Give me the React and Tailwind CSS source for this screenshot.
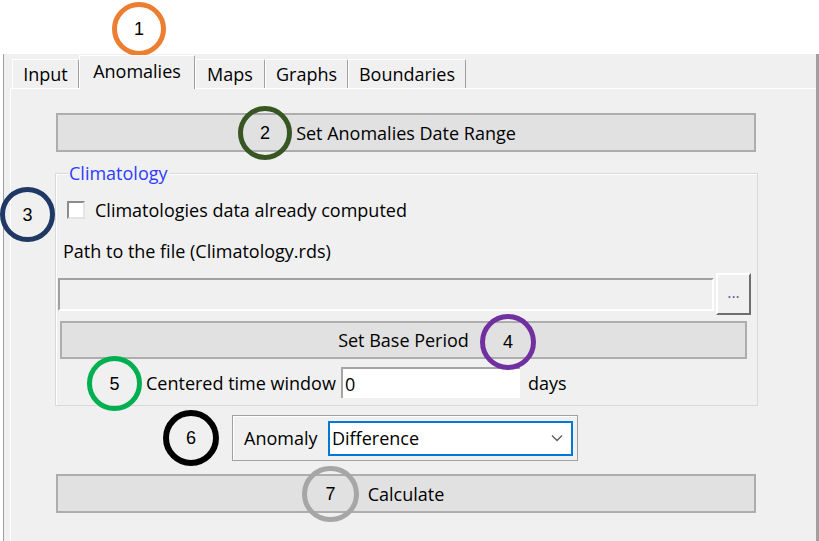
import React from "react";

function Ring({ className, n }) {
  return (
    <div
      className={`absolute rounded-full flex items-center justify-center bg-transparent text-[18px] text-black ${className}`}
      style={{ fontFamily: '"Liberation Sans", Arial, sans-serif' }}
    >
      {n}
    </div>
  );
}

function WinButton({ className, children }) {
  return (
    <div
      className={`flex items-center justify-center bg-[#e1e1e1] border-2 border-[#adadad] text-black ${className}`}
    >
      {children}
    </div>
  );
}

function Tab({ w, selected, children }) {
  if (selected) {
    return (
      <div
        className={`${w} h-[34px] -mb-[1px] relative z-10 bg-[#f0f0f0] border-t border-l border-white border-r border-r-[#a0a0a0] rounded-tr-[2px] flex items-start justify-center pt-[4px]`}
      >
        {children}
      </div>
    );
  }
  return (
    <div
      className={`${w} h-[29px] bg-[#f0f0f0] border-t border-l border-white border-r border-r-[#a0a0a0] rounded-tr-[2px] flex items-start justify-center pt-[3px]`}
    >
      {children}
    </div>
  );
}

export default function App() {
  return (
    <div
      className="w-[819px] h-[541px] bg-white relative overflow-hidden text-[18px] leading-[22px] text-black"
      style={{ fontFamily: '"Open Sans", "Noto Sans", sans-serif' }}
    >
      <div className="h-[54px]" />
      <div className="h-[487px] ml-[3px] bg-[#f0f0f0] border-l border-l-[#a0a0a0] border-r-[3px] border-r-[#a0a0a0] flex flex-col">
        {/* tab strip */}
        <div className="h-[34px] pl-[8px] flex items-end">
          <Tab w="w-[67px]">Input</Tab>
          <Tab w="w-[116px]" selected>
            Anomalies
          </Tab>
          <Tab w="w-[70px]">Maps</Tab>
          <Tab w="w-[83px]">Graphs</Tab>
          <Tab w="w-[118px]">Boundaries</Tab>
        </div>
        {/* panel */}
        <div className="flex-1 ml-[6px] border-t border-l border-white flex flex-col">
          <WinButton className="mt-[24px] ml-[45px] w-[700px] h-[39px]">
            Set Anomalies Date Range
          </WinButton>

          {/* group box */}
          <div className="relative mt-[21px] ml-[44px] w-[703px] h-[233px] border border-[#d9d9d9] shadow-[inset_1px_1px_0_#ffffff] flex flex-col">
            <div className="absolute left-[12px] -top-[12px] px-[1px] bg-[#f0f0f0] text-[#2f3cff]">
              Climatology
            </div>
            <div className="mt-[25px] ml-[11px] h-[22px] flex items-center">
              <div className="w-[18px] h-[18px] bg-white border-2 border-t-[#8c8c8c] border-l-[#8c8c8c] border-b-[#e3e3e3] border-r-[#e3e3e3]" />
              <span className="ml-[10px]">Climatologies data already computed</span>
            </div>
            <div className="mt-[19px] ml-[7px] h-[22px] flex items-center">
              Path to the file (Climatology.rds)
            </div>
            <div className="mt-[11px] ml-[2px] flex items-center">
              <div className="w-[656px] h-[33px] bg-[#f0f0f0] border-2 border-t-[#a0a0a0] border-l-[#a0a0a0] border-b-white border-r-white" />
              <div className="ml-[2px] w-[35px] h-[42px] bg-[#f0f0f0] border-2 border-t-white border-l-white border-b-[#6e6e6e] border-r-[#6e6e6e] flex items-center justify-center text-[16px] leading-none text-[#6a5a8a] pb-[4px]">
                ...
              </div>
            </div>
            <WinButton className="mt-[6px] ml-[4px] w-[687px] h-[38px]">
              Set Base Period
            </WinButton>
            <div className="mt-[8px] ml-[90px] h-[31px] flex items-center">
              <span className="w-[195px]">Centered time window</span>
              <div className="w-[179px] h-[31px] bg-white border-t-2 border-l-2 border-[#a5a5a5] flex items-center pl-[2px]">
                0
              </div>
              <span className="ml-[8px]">days</span>
            </div>
          </div>

          {/* anomaly box */}
          <div className="mt-[9px] ml-[221px] w-[346px] h-[46px] border border-[#a0a0a0] shadow-[inset_1px_1px_0_#ffffff] flex items-center">
            <span className="pl-[11px] w-[95px]">Anomaly</span>
            <div className="w-[245px] h-[35px] bg-white border-2 border-[#0078d7] flex items-center justify-between pl-[2px] pr-[8px]">
              <span>Difference</span>
              <svg width="12" height="8" viewBox="0 0 12 8">
                <path d="M1 1.5 L6 6.5 L11 1.5" fill="none" stroke="#5f5f5f" strokeWidth="1.4" />
              </svg>
            </div>
          </div>

          <WinButton className="mt-[13px] ml-[45px] w-[700px] h-[39px]">Calculate</WinButton>
        </div>
      </div>

      {/* annotation rings */}
      <Ring className="left-[112px] top-[2px] w-[54px] h-[54px] border-[5px] border-[#ed7d31]" n="1" />
      <Ring className="left-[238px] top-[106px] w-[54px] h-[54px] border-[5px] border-[#375623]" n="2" />
      <Ring className="left-[0px] top-[187px] w-[55px] h-[55px] border-[5px] border-[#1f3864]" n="3" />
      <Ring className="left-[480px] top-[314px] w-[56px] h-[56px] border-[5px] border-[#7030a0]" n="4" />
      <Ring className="left-[87px] top-[356px] w-[55px] h-[55px] border-[5px] border-[#00b050]" n="5" />
      <Ring className="left-[163px] top-[410px] w-[56px] h-[56px] border-[6px] border-black" n="6" />
      <Ring className="left-[302px] top-[466px] w-[57px] h-[56px] border-[5px] border-[#a6a6a6]" n="7" />
    </div>
  );
}
